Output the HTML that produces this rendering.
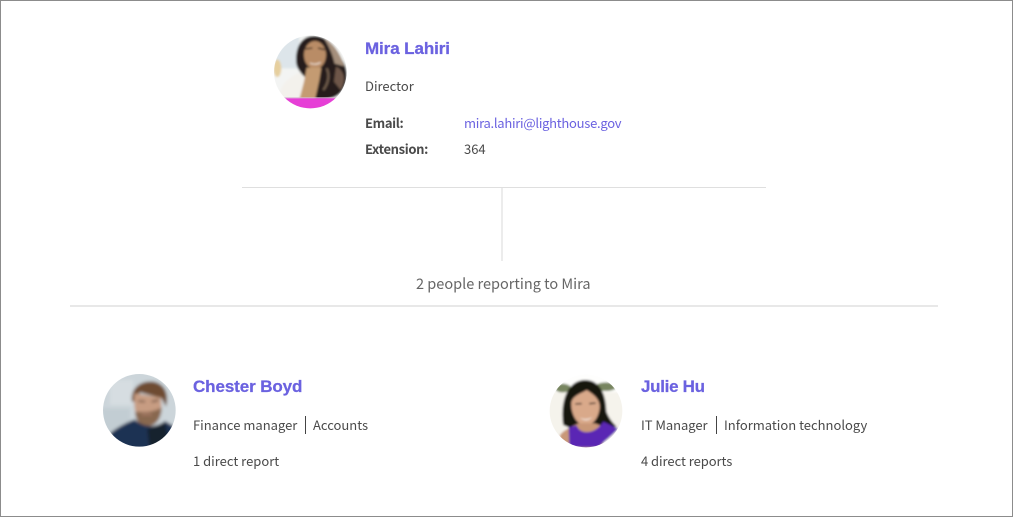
<!DOCTYPE html>
<html>
<head>
<meta charset="utf-8">
<style>
html,body{margin:0;padding:0;background:#fff}
#p{position:relative;width:1013px;height:517px;overflow:hidden;background:#fff;font-family:"Noto Sans CJK JP","Liberation Sans",sans-serif;color:#4a4a4a}
#b{position:absolute;left:0;top:0;width:1011px;height:515px;border:1px solid #8c8c8c}
.t{position:absolute;white-space:nowrap;font-size:13px;line-height:20px}
.n{position:absolute;white-space:nowrap;font-family:"Liberation Sans",sans-serif;font-weight:700;font-size:17px;line-height:24px;color:#6b62e0;-webkit-text-stroke:.25px #6b62e0;letter-spacing:-.1px}
.s{font-weight:700;letter-spacing:-.35px}
.l{position:absolute;background:#dfdfdf}
.v{position:absolute;width:1px;height:18px;background:#444}
svg{position:absolute}
</style>
</head>
<body>
<div id="p">
<div id="b"></div>

<svg style="left:260px;top:25px" width="100" height="90" viewBox="0 0 300 270">
<defs>
<clipPath id="c1"><circle cx="151" cy="141" r="109"/></clipPath>
<filter id="f1" x="-20%" y="-20%" width="140%" height="140%"><feGaussianBlur stdDeviation="3.5"/></filter>
</defs>
<g clip-path="url(#c1)"><g filter="url(#f1)">
<rect width="300" height="270" fill="#f3f4f3"/>
<path d="M40 30H118V130H40Z" fill="#dde5ea"/>
<ellipse cx="52" cy="130" rx="12" ry="26" fill="#e6cf9e"/>
<path d="M58 220C58 180 85 155 132 138L150 225H58Z" fill="#f3f1ec"/>
<path d="M108 105C108 58 130 30 168 33C205 36 230 70 242 100C264 125 267 165 250 192C236 218 205 226 165 224C160 195 142 160 128 150C116 135 108 125 108 105Z" fill="#261f1b"/>
<path d="M192 40C220 52 242 88 254 124L224 116C218 88 206 62 192 40Z" fill="#a58f7c"/>
<path d="M228 125C252 135 260 165 242 195L222 170Z" fill="#6e5748"/>
<path d="M200 130C210 150 205 175 190 195" stroke="#75604f" stroke-width="6" fill="none"/>
<ellipse cx="165" cy="90" rx="33" ry="42" fill="#b98c66"/>
<path d="M140 128H184L178 165L165 224H118L132 170Z" fill="#c49b72"/>
<path d="M150 114Q166 122 182 112" stroke="#ecdccf" stroke-width="3.5" fill="none"/>
<path d="M136 72L157 69M174 69L194 74" stroke="#2a1e18" stroke-width="4" fill="none"/>
</g>
<rect x="30" y="217" width="240" height="3" fill="#d9b4d4"/>
<rect x="30" y="220" width="240" height="40" fill="#e63fd6"/>
</g>
</svg>

<svg style="left:90px;top:365px" width="90" height="90" viewBox="0 0 270 270">
<defs>
<clipPath id="c2"><circle cx="148" cy="136" r="109"/></clipPath>
<filter id="f2" x="-20%" y="-20%" width="140%" height="140%"><feGaussianBlur stdDeviation="4.5"/></filter>
</defs>
<g clip-path="url(#c2)"><g filter="url(#f2)">
<rect width="270" height="270" fill="#ccd5da"/>
<rect x="60" y="45" width="70" height="75" fill="#d6dde1"/>
<rect x="35" y="130" width="85" height="70" fill="#c2cdd3"/>
<path d="M126 110C120 68 155 45 190 50C225 56 238 88 228 125L215 100L150 82L135 110Z" fill="#6e4c30"/>
<path d="M134 85L212 98L215 135C210 175 170 188 148 172C134 150 130 115 134 85Z" fill="#c79c82"/>
<path d="M135 142C150 135 165 152 215 128C214 165 195 186 165 184C148 182 138 165 135 142Z" fill="#886850"/>
<path d="M145 108L165 110M185 110L205 106" stroke="#4a3325" stroke-width="4" fill="none"/>
<path d="M155 150Q170 146 185 150" stroke="#b07e6c" stroke-width="4" fill="none"/>
<path d="M60 205C85 185 115 170 135 163C155 185 195 192 225 168L270 195V270H60Z" fill="#1e3352"/>
<path d="M172 192L226 172L238 245H178Z" fill="#15202f"/>
</g></g>
</svg>

<svg style="left:540px;top:370px" width="90" height="85" viewBox="0 0 270 255">
<defs>
<clipPath id="c3"><circle cx="138" cy="123" r="109"/></clipPath>
<filter id="f3" x="-20%" y="-20%" width="140%" height="140%"><feGaussianBlur stdDeviation="3"/></filter>
</defs>
<g clip-path="url(#c3)"><g filter="url(#f3)">
<rect width="270" height="255" fill="#fefefd"/>
<rect x="0" y="66" width="270" height="190" fill="#f5f3ec"/>
<ellipse cx="68" cy="54" rx="24" ry="13" fill="#77855f"/>
<ellipse cx="198" cy="50" rx="32" ry="13" fill="#77855f"/>
<path d="M70 165C60 100 80 31 135 30C184 30 198 80 199 125C207 145 217 158 230 170L100 178Z" fill="#17120f"/>
<path d="M94 98C98 76 125 70 140 60C162 74 180 88 179 112C176 147 156 167 135 167C110 165 92 130 94 98Z" fill="#d9a98a"/>
<path d="M60 195C72 180 90 172 115 160H165L190 170V255H55Z" fill="#c99878"/>
<path d="M86 172L110 166C120 195 165 195 190 155L234 176C215 200 190 215 175 232H88Z" fill="#5a28b4"/>
<path d="M118 143Q137 152 158 141Q140 160 118 143Z" fill="#f2e4da"/>
<path d="M106 102L125 101M148 101L167 99" stroke="#2a1e18" stroke-width="4" fill="none"/>
</g></g>
</svg>

<div class="n" style="left:365px;top:37px">Mira Lahiri</div>
<div class="t" style="left:365px;top:76px">Director</div>
<div class="t s" style="left:365px;top:113px">Email:</div>
<div class="t" style="left:464px;top:113px;color:#6b62e0;letter-spacing:-.27px">mira.lahiri@lighthouse.gov</div>
<div class="t s" style="left:365px;top:139px">Extension:</div>
<div class="t" style="left:464px;top:139px">364</div>

<div class="l" style="left:242px;top:187px;width:524px;height:1px"></div>
<div class="l" style="left:501px;top:188px;width:2px;height:73px;background:#ececec"></div>
<div class="t" style="left:416px;top:273px;font-size:14.5px;line-height:22px;color:#666">2 people reporting to Mira</div>
<div class="l" style="left:70px;top:305px;width:868px;height:2px;background:#e8e8e8"></div>

<div class="n" style="left:193px;top:375px">Chester Boyd</div>
<div class="t" style="left:193px;top:415px">Finance manager</div>
<div class="v" style="left:305px;top:416px"></div>
<div class="t" style="left:313px;top:415px">Accounts</div>
<div class="t" style="left:193px;top:451px">1 direct report</div>

<div class="n" style="left:641px;top:375px;letter-spacing:-.3px">Julie Hu</div>
<div class="t" style="left:641px;top:415px;letter-spacing:-.05px">IT Manager</div>
<div class="v" style="left:716px;top:416px"></div>
<div class="t" style="left:724px;top:415px">Information technology</div>
<div class="t" style="left:641px;top:451px;letter-spacing:-.05px">4 direct reports</div>
</div>
</body>
</html>
